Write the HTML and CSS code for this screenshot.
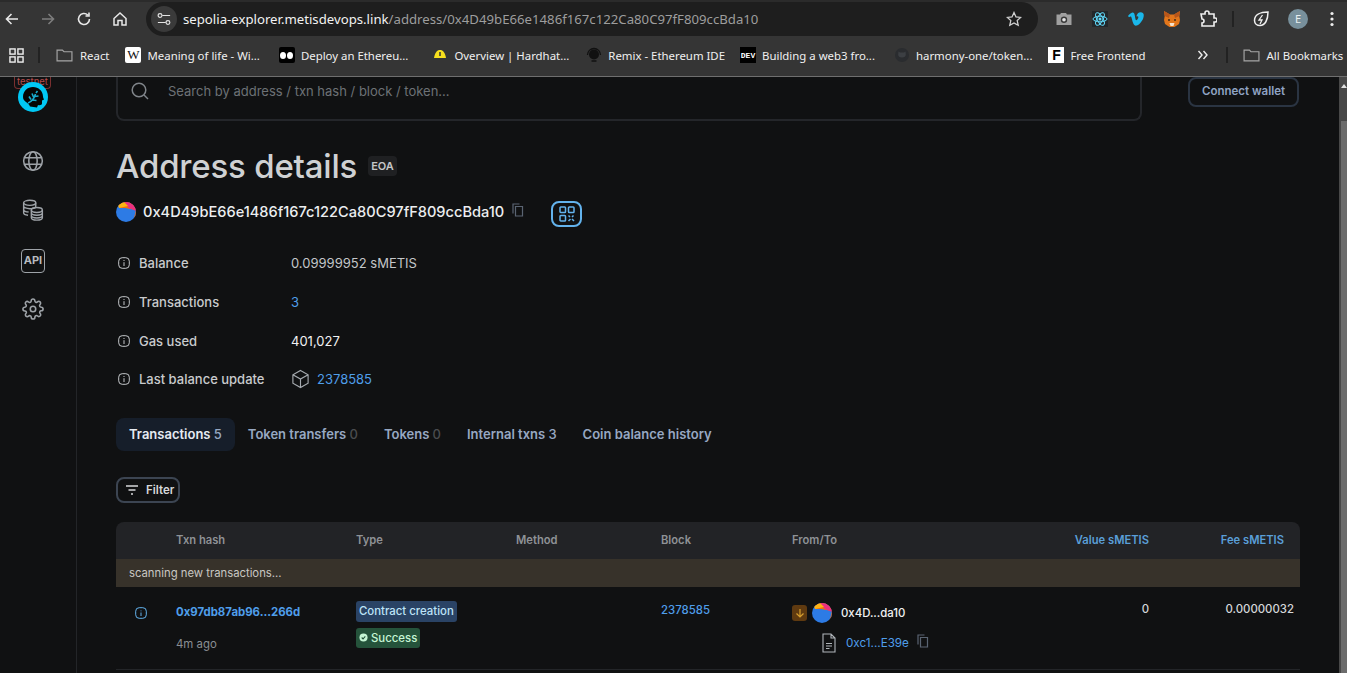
FILE: index.html
```html
<!DOCTYPE html>
<html lang="en">
<head>
    <meta charset="UTF-8">
    <meta name="viewport" content="width=device-width, initial-scale=1.0">
    <title>Address details</title>
    <link rel="stylesheet" href="styles.css">
</head>
<body>
    <header class="chrome">
        <div class="toolbar">
            <div class="nav-btns">
                <svg class="nav-ico" viewBox="0 0 16 16"><path d="M14 8H3M7.500 3 2.500 8l5 5" fill="none" stroke="#e8e8e8" stroke-width="1.600"/></svg>
                <svg class="nav-ico" viewBox="0 0 16 16"><path d="M2 8h11M8.500 3l5 5-5 5" fill="none" stroke="#7d7d7d" stroke-width="1.600"/></svg>
                <svg class="nav-ico" viewBox="0 0 16 16"><path d="M13.500 8A5.500 5.500 0 1 1 11.800 4M13 1.500V5H9.500" fill="none" stroke="#e8e8e8" stroke-width="1.600"/></svg>
                <svg class="nav-ico" viewBox="0 0 16 16"><path d="M2 7.500 8 2l6 5.500V14h-4V9.500H6V14H2z" fill="none" stroke="#e8e8e8" stroke-width="1.500"/></svg>
            </div>
            <div class="omnibox">
                <span class="site-btn">
                    <svg viewBox="0 0 16 16" width="14" height="14"><path d="M6 4h9M1 12h9" stroke="#e4e4e4" stroke-width="1.300"/><circle cx="3.500" cy="4" r="2.200" fill="none" stroke="#e4e4e4" stroke-width="1.300"/><circle cx="12.500" cy="12" r="2.200" fill="none" stroke="#e4e4e4" stroke-width="1.300"/></svg>
                </span>
                <span class="url"><span class="url-host">sepolia-explorer.metisdevops.link</span>/address/0x4D49bE66e1486f167c122Ca80C97fF809ccBda10</span>
                <svg class="star" viewBox="0 0 16 16" width="16" height="16"><path d="m8 1.500 2 4.400 4.700.5-3.500 3.200 1 4.700L8 11.900 3.800 14.300l1-4.700L1.300 6.400 6 5.900z" fill="none" stroke="#d0d0d0" stroke-width="1.300"/></svg>
            </div>
            <div class="extensions">
                <svg class="ext" viewBox="0 0 18 18"><path d="M1.500 4.500H5L6 3h5l1 1.500h4.500V15h-15z" fill="#a0a0a0"/><circle cx="9" cy="9.800" r="3.200" fill="#3a3a3a"/><circle cx="9" cy="9.800" r="1.800" fill="#e4e4e4"/></svg>
                <svg class="ext" viewBox="0 0 18 18"><rect x="1" y="1" width="16" height="16" fill="#23272a"/><g fill="none" stroke="#61dafb" stroke-width="1"><ellipse cx="9" cy="9" rx="7" ry="2.800"/><ellipse cx="9" cy="9" rx="7" ry="2.800" transform="rotate(60 9 9)"/><ellipse cx="9" cy="9" rx="7" ry="2.800" transform="rotate(120 9 9)"/></g><circle cx="9" cy="9" r="1.500" fill="#61dafb"/></svg>
                <svg class="ext" viewBox="0 0 18 18"><path d="M1 6 2 7.200c1-.7 1.700-1 2-.6.600.8 1.300 4.600 2.200 6.700.6 1.300 1.500 2.400 2.700 2.400 2 0 5-2.800 7-6.500C17.300 6 17.400 2.500 13.800 2.300c-2.200-.1-3.700 1.400-4.500 4.300 1.700-.8 2.500.2 1.800 1.700-.6 1.200-1.300 2-1.800 2-.7 0-1-2-1.400-4.300C7.500 3.600 6.800 2.400 5.400 2.600 4 2.800 2.300 4.600 1 6z" fill="#1ab7ea"/></svg>
                <svg class="ext" viewBox="0 0 18 18"><path d="M1 1 7 4.500h4L17 1l-.7 5 .7 4-1 4-4.500 3h-5L2 14l-1-4 .7-4z" fill="#e2761b"/><path d="M1 1 7 4.500 6 8 1.700 6zM17 1l-6 3.500L12 8l4.300-2z" fill="#b8561a"/><path d="M6.500 13h5L10.500 16h-3z" fill="#f5e3cf"/><circle cx="6" cy="10" r="1" fill="#3b2a1a"/><circle cx="12" cy="10" r="1" fill="#3b2a1a"/></svg>
                <svg class="ext" viewBox="0 0 18 18"><path d="M2 4h4V3a2 2 0 0 1 4 0v1h5v4h1a2 2 0 0 1 0 4h-1v4H3v-3a2 2 0 0 0 0-4z" fill="none" stroke="#f0f0f0" stroke-width="1.600"/></svg>
                <span class="sep sep-ext"></span>
                <svg class="ext" viewBox="0 0 18 18"><path d="M16 2C8 2 2.500 5 2.500 10.500c0 3 2.500 5 5.500 5 5 0 8-5.500 8-13.500z" fill="none" stroke="#f0f0f0" stroke-width="1.500"/><path d="M10.500 5 7 10h3l-2 4" fill="none" stroke="#f0f0f0" stroke-width="1.300"/></svg>
                <span class="avatar">E</span>
                <svg class="ext-menu" viewBox="0 0 4 16" width="4" height="16"><circle cx="2" cy="2.500" r="1.600" fill="#eee"/><circle cx="2" cy="8" r="1.600" fill="#eee"/><circle cx="2" cy="13.500" r="1.600" fill="#eee"/></svg>
            </div>
        </div>
        <nav class="bookmarks">
            <svg class="apps" viewBox="0 0 16 16" width="15" height="15"><g fill="none" stroke="#eee" stroke-width="1.500"><rect x="1" y="1" width="5.500" height="5.500"/><rect x="9.500" y="1" width="5.500" height="5.500"/><rect x="1" y="9.500" width="5.500" height="5.500"/><rect x="9.500" y="9.500" width="5.500" height="5.500"/></g></svg>
            <span class="sep sep-apps"></span>
            <a class="bm bm-react"><svg class="folder" viewBox="0 0 16 16"><path d="M1 3h5l1.500 1.500H15V13H1z" fill="none" stroke="#a6a6a6" stroke-width="1.100"/></svg>React</a>
            <a class="bm bm-wiki"><span class="fav fav-w">W</span>Meaning of life - Wi...</a>
            <a class="bm bm-medium"><span class="fav fav-m"><i></i><i></i></span>Deploy an Ethereu...</a>
            <a class="bm bm-hard"><svg class="fav-svg" viewBox="0 0 16 16"><path d="M8 3c3 0 5 2.500 6 8H2c1-5.500 3-8 6-8z" fill="#f7df1e"/><path d="M8 5v4" stroke="#333" stroke-width="1.500"/></svg>Overview | Hardhat...</a>
            <a class="bm bm-remix"><svg class="fav-svg" viewBox="0 0 16 16"><circle cx="8" cy="7.500" r="5" fill="#111"/><path d="M1.500 8a6.500 6.500 0 0 1 13 0M5.500 14h5" fill="none" stroke="#111" stroke-width="1.300"/></svg>Remix - Ethereum IDE</a>
            <a class="bm bm-dev"><span class="fav fav-dev">DEV</span>Building a web3 fro...</a>
            <a class="bm bm-gh"><svg class="fav-svg" viewBox="0 0 16 16"><circle cx="8" cy="8" r="7" fill="#2a2c2f"/><path d="M4.500 4.500 6 5.500h4l1.500-1 .3 3c0 2-1.300 3-3.800 3s-3.800-1-3.800-3z" fill="#3c3f43"/></svg>harmony-one/token...</a>
            <a class="bm bm-ff"><span class="fav fav-f">F</span>Free Frontend</a>
            <svg class="more" viewBox="0 0 12 10" width="12" height="10"><path d="M1.500 1 5 5 1.500 9M6.500 1 10 5 6.500 9" fill="none" stroke="#eee" stroke-width="1.400"/></svg>
            <span class="sep sep-all"></span>
            <a class="bm bm-all"><svg class="folder" viewBox="0 0 16 16"><path d="M1 3h5l1.500 1.500H15V13H1z" fill="none" stroke="#a6a6a6" stroke-width="1.100"/></svg>All Bookmarks</a>
        </nav>
    </header>

    <div class="viewport">
        <aside class="sidebar">
            <div class="logo-wrap">
                <span class="testnet">testnet</span>
                <svg class="logo" viewBox="0 0 30 30"><circle cx="15" cy="15" r="15" fill="#00c8f5"/><path d="M5 15C5 9 9.500 5 15 5c5.500 0 10 4 10 9.500 0 1.500 1 2.500 1 3l-2 1v3c0 1.500-2 2-4 1.500l-1 2.500-7-1c-1-2.500-2-3-4-4.500-1.500-1.200-3-2.500-3-5z" fill="#050505"/><path d="M10 21c3-1 6-4 7.500-9M13 17.500l-2-3M15.500 15l-1.500-3.500M14.500 18l4 .5M17 14.500l3.500-.5M18 11l1.500-2" fill="none" stroke="#18a9cc" stroke-width="1.600"/></svg>
            </div>
            <nav class="side-nav">
                <svg class="side-ico" viewBox="0 0 20 20"><g fill="none" stroke="#9ea3a8" stroke-width="1.400"><circle cx="10" cy="10" r="8.500"/><ellipse cx="10" cy="10" rx="3.800" ry="8.500"/><path d="M2 7h16M2 13h16"/></g></svg>
                <svg class="side-ico" viewBox="0 0 20 20"><g fill="none" stroke="#9ea3a8" stroke-width="1.300"><ellipse cx="7" cy="3.500" rx="5.500" ry="2.300"/><path d="M1.500 3.500v9c0 1.200 1.500 2 4 2.200M1.500 6.500c0 1.200 2.500 2.300 5.500 2.300s5.500-1 5.500-2.300v-3M1.500 9.500c0 1.200 2 2.200 4.500 2.300"/><ellipse cx="13.500" cy="10" rx="5" ry="2.200"/><path d="M8.500 10v7c0 1.300 2.200 2.200 5 2.200s5-1 5-2.200v-7M8.500 12.500c0 1.200 2.200 2.200 5 2.200s5-1 5-2.200M8.500 15c0 1.200 2.200 2.200 5 2.200s5-1 5-2.200"/></g></svg>
                <span class="api-ico">API</span>
                <svg class="side-ico side-gear" viewBox="0 0 24 24"><g fill="none" stroke="#9ea3a8" stroke-width="1.700"><circle cx="12" cy="12" r="3"/><path d="M19.400 15a1.650 1.650 0 0 0 .33 1.820l.06.06a2 2 0 0 1 0 2.830 2 2 0 0 1-2.830 0l-.06-.06a1.650 1.650 0 0 0-1.820-.33 1.650 1.650 0 0 0-1 1.510V21a2 2 0 0 1-2 2 2 2 0 0 1-2-2v-.09A1.650 1.650 0 0 0 9 19.400a1.650 1.650 0 0 0-1.820.33l-.06.06a2 2 0 0 1-2.830 0 2 2 0 0 1 0-2.830l.06-.06a1.650 1.650 0 0 0 .33-1.820 1.650 1.650 0 0 0-1.510-1H3a2 2 0 0 1-2-2 2 2 0 0 1 2-2h.09A1.650 1.650 0 0 0 4.600 9a1.650 1.650 0 0 0-.33-1.820l-.06-.06a2 2 0 0 1 0-2.830 2 2 0 0 1 2.830 0l.06.06a1.650 1.650 0 0 0 1.820.33H9a1.650 1.650 0 0 0 1-1.510V3a2 2 0 0 1 2-2 2 2 0 0 1 2 2v.09a1.650 1.650 0 0 0 1 1.510 1.650 1.650 0 0 0 1.820-.33l.06-.06a2 2 0 0 1 2.830 0 2 2 0 0 1 0 2.830l-.06.06a1.650 1.650 0 0 0-.33 1.820V9a1.650 1.650 0 0 0 1.510 1H21a2 2 0 0 1 2 2 2 2 0 0 1-2 2h-.09a1.650 1.650 0 0 0-1.510 1z"/></g></svg>
            </nav>
        </aside>

        <main class="main">
            <div class="top-row">
                <div class="search">
                    <svg viewBox="0 0 20 20" width="20" height="20"><circle cx="9" cy="9" r="6.800" fill="none" stroke="#80858a" stroke-width="1.500"/><path d="m14 14 4 4" stroke="#80858a" stroke-width="1.500"/></svg>
                    <span class="search-text">Search by address / txn hash / block / token...</span>
                </div>
                <button class="connect">Connect wallet</button>
            </div>

            <div class="title-row">
                <h1>Address details</h1>
                <span class="eoa">EOA</span>
            </div>

            <div class="address-row">
                <svg class="identicon" viewBox="0 0 20 20"><defs><clipPath id="ic1"><circle cx="10" cy="10" r="10"/></clipPath></defs><g clip-path="url(#ic1)"><rect width="20" height="20" fill="#2d7be5"/><path d="M2 0h18v20h-3L20 8 9 6 3 6z" fill="#f26b0f"/><path d="M8 0h12v9L13 6z" fill="#ec2f7f"/><path d="M2 3l6-3 4 4-9 2z" fill="#fbb414"/></g></svg>
                <span class="address">0x4D49bE66e1486f167c122Ca80C97fF809ccBda10</span>
                <svg class="copy copy-main" viewBox="0 0 12 14"><path d="M3.500 3.500h7v9.500h-7z" fill="none" stroke="#5a6472" stroke-width="1.200"/><path d="M1 10.500V1h6.500" fill="none" stroke="#5a6472" stroke-width="1.200"/></svg>
                <button class="qr">
                    <svg viewBox="0 0 16 16" width="16" height="16"><g fill="none" stroke="#63b3ed" stroke-width="1.500"><rect x="1" y="1" width="5.500" height="5.500" rx=".8"/><rect x="9.500" y="1" width="5.500" height="5.500" rx=".8"/><rect x="1" y="9.500" width="5.500" height="5.500" rx=".8"/><path d="M9.500 9.500l1.500 1.500M14.500 9.500 13 11M11.500 13l-2 2M13 13l2 2"/></g></svg>
                </button>
            </div>

            <dl class="details">
                <div class="detail">
                    <dt><svg class="info" viewBox="0 0 12 12"><rect x=".7" y=".7" width="10.600" height="10.600" rx="3.500" fill="none" stroke="#c4c7ca" stroke-width="1"/><path d="M6 5.200V9M6 3v1" stroke="#c4c7ca"/></svg>Balance</dt>
                    <dd>0.09999952 sMETIS</dd>
                </div>
                <div class="detail">
                    <dt><svg class="info" viewBox="0 0 12 12"><rect x=".7" y=".7" width="10.600" height="10.600" rx="3.500" fill="none" stroke="#c4c7ca" stroke-width="1"/><path d="M6 5.200V9M6 3v1" stroke="#c4c7ca"/></svg>Transactions</dt>
                    <dd><a class="link">3</a></dd>
                </div>
                <div class="detail">
                    <dt><svg class="info" viewBox="0 0 12 12"><rect x=".7" y=".7" width="10.600" height="10.600" rx="3.500" fill="none" stroke="#c4c7ca" stroke-width="1"/><path d="M6 5.200V9M6 3v1" stroke="#c4c7ca"/></svg>Gas used</dt>
                    <dd class="strong">401,027</dd>
                </div>
                <div class="detail detail-last">
                    <dt><svg class="info" viewBox="0 0 12 12"><rect x=".7" y=".7" width="10.600" height="10.600" rx="3.500" fill="none" stroke="#c4c7ca" stroke-width="1"/><path d="M6 5.200V9M6 3v1" stroke="#c4c7ca"/></svg>Last balance update</dt>
                    <dd class="block-cell">
                        <svg class="cube" viewBox="0 0 20 20"><path d="M10 1 18 5.500v9L10 19l-8-4.500v-9zM2 5.500 10 10l8-4.500M10 10v9" fill="none" stroke="#a6abb0" stroke-width="1.200"/></svg>
                        <a class="link">2378585</a>
                    </dd>
                </div>
            </dl>

            <div class="tabs">
                <span class="tab tab-active">Transactions <em>5</em></span>
                <span class="tab">Token transfers <em class="zero">0</em></span>
                <span class="tab">Tokens <em class="zero">0</em></span>
                <span class="tab">Internal txns <em>3</em></span>
                <span class="tab">Coin balance history</span>
            </div>

            <button class="filter">
                <svg viewBox="0 0 14 10" width="14" height="10"><path d="M1 1h12M3.500 5h7M6 9h2" stroke="#d6d8da" stroke-width="1.300"/></svg>
                Filter
            </button>

            <table class="txns">
                <colgroup>
                    <col class="c-info"><col class="c-hash"><col class="c-type"><col class="c-method"><col class="c-block"><col class="c-from"><col class="c-value"><col class="c-fee">
                </colgroup>
                <thead>
                    <tr>
                        <th></th>
                        <th>Txn hash</th>
                        <th>Type</th>
                        <th>Method</th>
                        <th>Block</th>
                        <th>From/To</th>
                        <th class="num"><span class="th-link">Value sMETIS</span></th>
                        <th class="num th-fee"><span class="th-link">Fee sMETIS</span></th>
                    </tr>
                </thead>
                <tbody>
                    <tr class="scan"><td colspan="8">scanning new transactions...</td></tr>
                    <tr class="row">
                        <td class="cell-info"><svg class="info" viewBox="0 0 12 12"><rect x=".7" y=".7" width="10.600" height="10.600" rx="3.500" fill="none" stroke="#63b3ed" stroke-width="1"/><path d="M6 5.500V9M6 3.500v.8" stroke="#63b3ed"/></svg></td>
                        <td class="cell-hash">
                            <a class="link hash">0x97db87ab96...266d</a>
                            <div class="age">4m ago</div>
                        </td>
                        <td>
                            <div class="badges">
                                <span class="badge badge-type">Contract creation</span>
                                <span class="badge badge-ok"><svg viewBox="0 0 10 10" width="9" height="9"><circle cx="5" cy="5" r="4.500" fill="#c6f6d5"/><path d="m3 5 1.500 1.500L7 3.800" fill="none" stroke="#25533b" stroke-width="1.200"/></svg>Success</span>
                            </div>
                        </td>
                        <td></td>
                        <td><a class="link block-no">2378585</a></td>
                        <td>
                            <div class="from">
                                <span class="dir"><svg viewBox="0 0 10 10" width="10" height="10"><path d="M5 1v8M1.500 5.500 5 9l3.500-3.500" fill="none" stroke="#d69e2e" stroke-width="1.200"/></svg></span>
                                <svg class="identicon" viewBox="0 0 20 20"><defs><clipPath id="ic2"><circle cx="10" cy="10" r="10"/></clipPath></defs><g clip-path="url(#ic2)"><rect width="20" height="20" fill="#2d7be5"/><path d="M2 0h18v20h-3L20 8 9 6 3 6z" fill="#f26b0f"/><path d="M8 0h12v9L13 6z" fill="#ec2f7f"/><path d="M2 3l6-3 4 4-9 2z" fill="#fbb414"/></g></svg>
                                <span class="short">0x4D...da10</span>
                            </div>
                            <div class="to">
                                <svg class="doc" viewBox="0 0 14 20"><path d="M1 1h8l4 4v14H1zM9 1v4h4M4 10.500h6M4 13h6M4 15.500h3.500" fill="none" stroke="#b0b5ba" stroke-width="1.100"/></svg>
                                <a class="link">0xc1...E39e</a>
                                <svg class="copy" viewBox="0 0 12 14"><path d="M3.500 3.500h7v9.500h-7z" fill="none" stroke="#5a6472" stroke-width="1.200"/><path d="M1 10.500V1h6.500" fill="none" stroke="#5a6472" stroke-width="1.200"/></svg>
                            </div>
                        </td>
                        <td class="num val">0</td>
                        <td class="num val val-fee">0.00000032</td>
                    </tr>
                </tbody>
            </table>
        </main>

        <div class="scrollbar">
            <span class="arrow-up"></span>
            <span class="thumb"></span>
        </div>
    </div>
</body>
</html>
```

FILE: styles.css
```css
* {
    box-sizing: border-box;
}
html, body {
    height: 100%;
}
body {
    margin: 0;
    height: 673px;
    overflow: hidden;
    display: flex;
    flex-direction: column;
    background-color: #101112;
    color: #d5d7d9;
    font-family: 'Inter', 'Liberation Sans', sans-serif;
    font-size: 14px;
}
a {
    text-decoration: none;
}

/* browser chrome */
.chrome {
    flex: 0 0 77px;
    background-color: #353535;
    border-bottom: 1px solid #6f6f6f;
    font-family: 'Noto Sans', 'Liberation Sans', sans-serif;
}
.toolbar {
    height: 38px;
    display: flex;
    align-items: center;
    padding-bottom: 2px;
    border-top: 2px solid #2b2b2b;
}
.nav-btns {
    display: flex;
    gap: 20px;
    padding-left: 4px;
    width: 146px;
}
.nav-ico {
    width: 16px;
    height: 16px;
}
.omnibox {
    width: 892px;
    height: 34px;
    background-color: #1e1e1e;
    border-radius: 17px;
    display: flex;
    align-items: center;
    padding: 0 16px 0 5px;
}
.site-btn {
    width: 26px;
    height: 26px;
    border-radius: 50%;
    background-color: #3a3a3a;
    display: flex;
    align-items: center;
    justify-content: center;
}
.url {
    flex: 1;
    margin-left: 6px;
    color: #9d9d9d;
    font-size: 13.2px;
}
.url-host {
    color: #f2f2f2;
}
.extensions {
    display: flex;
    align-items: center;
    flex: 1;
    padding-left: 17px;
    gap: 18px;
}
.ext {
    width: 18px;
    height: 18px;
    flex: none;
}
.sep {
    width: 2px;
    height: 16px;
    background-color: #222;
    flex: none;
}
.sep-ext {
    margin-left: -3px;
}
.avatar {
    width: 20px;
    height: 20px;
    border-radius: 50%;
    background-color: #78909c;
    color: #e8eef0;
    font-size: 11px;
    text-align: center;
    line-height: 20px;
    flex: none;
}
.ext-menu {
    flex: none;
    margin-left: 4px;
}

.bookmarks {
    height: 38px;
    display: flex;
    align-items: center;
    padding: 0 0 4px 9px;
    font-size: 11.4px;
    color: #f0f0f0;
}
.bm {
    display: flex;
    align-items: center;
    gap: 6px;
    white-space: nowrap;
}
.apps {
    flex: none;
}
.sep-apps {
    margin: 0 16px 0 14px;
}
.folder {
    width: 17px;
    height: 17px;
}
.fav {
    width: 16px;
    height: 16px;
    display: inline-flex;
    align-items: center;
    justify-content: center;
    flex: none;
}
.fav-svg {
    width: 16px;
    height: 16px;
    flex: none;
}
.fav-w {
    background-color: #fff;
    color: #111;
    font-family: 'Liberation Serif', serif;
    font-size: 13px;
    border-radius: 2px;
}
.fav-m {
    background-color: #000;
    gap: 1px;
    border-radius: 2px;
}
.fav-m i {
    width: 6px;
    height: 7px;
    border-radius: 50%;
    background-color: #fff;
}
.fav-dev {
    background-color: #000;
    color: #fff;
    font-family: 'Liberation Mono', monospace;
    font-size: 8px;
    font-weight: 700;
}
.fav-f {
    background-color: #fff;
    color: #000;
    font-family: 'Liberation Sans', sans-serif;
    font-weight: 700;
    font-size: 14px;
}
.bm-react { gap: 7px; margin-right: 16px; }
.bm-wiki { margin-right: 19px; }
.bm-medium { margin-right: 24px; }
.bm-hard { margin-right: 17px; }
.bm-remix { margin-right: 15px; }
.bm-dev { margin-right: 19px; }
.bm-gh { margin-right: 16px; }
.more {
    margin-left: 51px;
    flex: none;
}
.sep-all {
    margin: 0 15px 0 17px;
}
.bm-all {
    gap: 7px;
}

/* page */
.viewport {
    flex: 1;
    display: flex;
    min-height: 0;
    overflow: hidden;
}
.sidebar {
    flex: 0 0 77px;
    padding-right: 10px;
    border-right: 1px solid #232528;
}
.logo-wrap {
    position: relative;
    height: 60px;
    display: flex;
    justify-content: center;
}
.testnet {
    position: absolute;
    top: 0;
    left: 14px;
    width: 37px;
    height: 12px;
    border: 1px solid #7a3030;
    border-top: 0;
    border-radius: 0 0 4px 4px;
    color: #b34a4a;
    font-size: 9.5px;
    line-height: 10px;
    text-align: center;
}
.logo {
    position: relative;
    width: 30px;
    height: 30px;
    margin-top: 5px;
}
.side-nav {
    display: flex;
    flex-direction: column;
    align-items: center;
    gap: 27px;
    padding-top: 13px;
}
.side-ico {
    width: 22px;
    height: 22px;
}
.side-gear {
    margin-top: -2px;
}
.api-ico {
    width: 24px;
    height: 24px;
    margin-top: 1px;
    border: 1.5px solid #9ea3a8;
    border-radius: 4px;
    color: #b7bbbf;
    font-size: 11px;
    font-weight: 700;
    line-height: 21px;
    text-align: center;
}

.main {
    flex: 1;
    min-width: 0;
    padding: 0 39px;
}
.top-row {
    display: flex;
    align-items: flex-start;
    height: 44px;
    gap: 46px;
}
.search {
    flex: 0 0 1026px;
    height: 44px;
    border: 2px solid #24262a;
    border-top: 0;
    border-radius: 0 0 8px 8px;
    display: flex;
    align-items: center;
    padding: 0 0 14px 12px;
    gap: 18px;
}
.search-text {
    color: #6d7176;
    font-size: 13px;
}
.connect {
    width: 111px;
    height: 30px;
    padding: 0 0 3px;
    background: none;
    border: 2px solid #2a3442;
    border-radius: 8px;
    color: #90a4c4;
    font: 600 11.5px 'Inter', 'Liberation Sans', sans-serif;
}
.title-row {
    display: flex;
    align-items: center;
    gap: 11px;
    margin-top: 23px;
    height: 44px;
}
h1 {
    margin: 0;
    font-size: 33px;
    font-weight: 500;
    color: #cfd1d3;
    letter-spacing: -.2px;
}
.eoa {
    background-color: #1f2022;
    border-radius: 4px;
    font-size: 11px;
    font-weight: 600;
    color: #c4c6c8;
    padding: 3px 3px;
}
.address-row {
    display: flex;
    align-items: center;
    margin-top: 11px;
    height: 26px;
}
.identicon {
    width: 20px;
    height: 20px;
    flex: none;
}
.address {
    margin-left: 7px;
    font-size: 14.6px;
    font-weight: 500;
    color: #eceef0;
}
.copy {
    width: 12px;
    height: 14px;
    flex: none;
}
.copy-main {
    margin: -4px 0 0 8px;
}
.qr {
    margin: 3px 0 0 27px;
    width: 31px;
    height: 26px;
    padding: 0;
    background: none;
    border: 2px solid #63b3ed;
    border-radius: 8px;
    display: flex;
    align-items: center;
    justify-content: center;
}

.details {
    margin: 18px 0 0;
}
.detail {
    display: flex;
    align-items: center;
    height: 39px;
}
.detail-last {
    height: 37px;
}
.detail dt {
    width: 175px;
    display: flex;
    align-items: center;
    gap: 9px;
    font-size: 13px;
    font-weight: 500;
    color: #c9cbcd;
    padding-left: 2px;
}
.detail dd {
    margin: 0;
    font-size: 13px;
    color: #c3c6c9;
}
.detail .strong {
    color: #f0f1f2;
}
.info {
    width: 12px;
    height: 12px;
    flex: none;
}
.link {
    color: #4f9eea;
}
.block-cell {
    display: flex;
    align-items: center;
    gap: 7px;
}
.cube {
    width: 19px;
    height: 20px;
}

.tabs {
    display: flex;
    margin-top: 21px;
    font-size: 13px;
    font-weight: 600;
    color: #97a8c2;
}
.tab {
    height: 33px;
    line-height: 33px;
    padding: 0 13px;
    white-space: nowrap;
}
.tab em {
    font-style: normal;
    font-weight: 500;
}
.tab em.zero {
    color: #4a4c4e;
}
.tab-active {
    background-color: #161e2a;
    border-radius: 8px;
    color: #e6ebf2;
}
.tab-active em {
    color: #97a8c2;
}
.filter {
    display: flex;
    align-items: center;
    gap: 7px;
    margin-top: 26px;
    width: 64px;
    height: 26px;
    padding: 0 0 0 7px;
    background: none;
    border: 2px solid #3c4552;
    border-radius: 8px;
    color: #d6d8da;
    font: 600 11.5px 'Inter', 'Liberation Sans', sans-serif;
}

.txns {
    width: 1184px;
    margin-top: 19px;
    table-layout: fixed;
    border-collapse: separate;
    border-spacing: 0;
    font-size: 11.4px;
}
.c-info { width: 60px; }
.c-hash { width: 180px; }
.c-type { width: 160px; }
.c-method { width: 145px; }
.c-block { width: 131px; }
.c-from { width: 208px; }
.c-value { width: 149px; }
.c-fee { width: 151px; }
.txns th {
    height: 37px;
    padding: 0 0 2px;
    background-color: #222326;
    color: #8f9296;
    font-size: 11.2px;
    font-weight: 600;
    text-align: left;
}
.txns th:first-child {
    border-top-left-radius: 8px;
}
.txns th:last-child {
    border-top-right-radius: 8px;
}
.txns .num {
    text-align: right;
}
.th-link {
    color: #5a9fd8;
}
.txns .th-fee {
    padding-right: 16px;
}
.scan td {
    height: 28px;
    padding: 0 0 0 13px;
    background-color: #37322a;
    color: #c9c7c2;
    font-size: 11.3px;
}
.row td {
    height: 83px;
    padding: 0;
    vertical-align: top;
    border-bottom: 1px solid #232528;
}
.row .cell-info {
    padding: 20px 0 0 19px;
}
.row .cell-hash {
    padding-top: 18px;
}
.hash {
    font-weight: 700;
    font-size: 11.4px;
}
.age {
    margin-top: 18px;
    color: #8a8e93;
}
.badges {
    display: flex;
    flex-direction: column;
    align-items: flex-start;
    gap: 6px;
    padding-top: 14px;
}
.badge {
    display: inline-flex;
    align-items: center;
    height: 20px;
    padding: 0 3px 1px;
    border-radius: 3px;
    font-weight: 500;
}
.badge-type {
    height: 21px;
    background-color: #2a4365;
    color: #bee3f8;
}
.badge-ok {
    gap: 3px;
    background-color: #25533b;
    color: #c6f6d5;
}
.row td:nth-child(5) {
    padding-top: 16px;
}
.block-no {
    font-weight: 500;
}
.from {
    display: flex;
    align-items: center;
    gap: 5px;
    padding-top: 16px;
}
.dir {
    width: 15px;
    height: 16px;
    border-radius: 3px;
    background-color: #5f3a10;
    display: flex;
    align-items: center;
    justify-content: center;
}
.short {
    margin-left: 4px;
    color: #f0f1f2;
    font-weight: 500;
}
.to {
    display: flex;
    align-items: center;
    padding: 10px 0 0 30px;
}
.to .link {
    font-size: 11.7px;
}
.doc {
    width: 14px;
    height: 20px;
    margin-right: 10px;
}
.to .copy {
    margin: -4px 0 0 8px;
}
.row .val {
    padding-top: 15px;
    color: #d5d7d9;
    font-weight: 500;
}
.row .val-fee {
    padding-right: 6px;
}

.scrollbar {
    flex: 0 0 8px;
    background-color: #484848;
    display: flex;
    flex-direction: column;
    align-items: flex-end;
    padding-top: 7px;
}
.arrow-up {
    width: 0;
    height: 0;
    border: 3px solid transparent;
    border-top: 0;
    border-bottom: 4px solid #e0e0e0;
}
.thumb {
    margin-top: 33px;
    width: 6px;
    flex: 1;
    background-color: #6c6c6c;
}
```
